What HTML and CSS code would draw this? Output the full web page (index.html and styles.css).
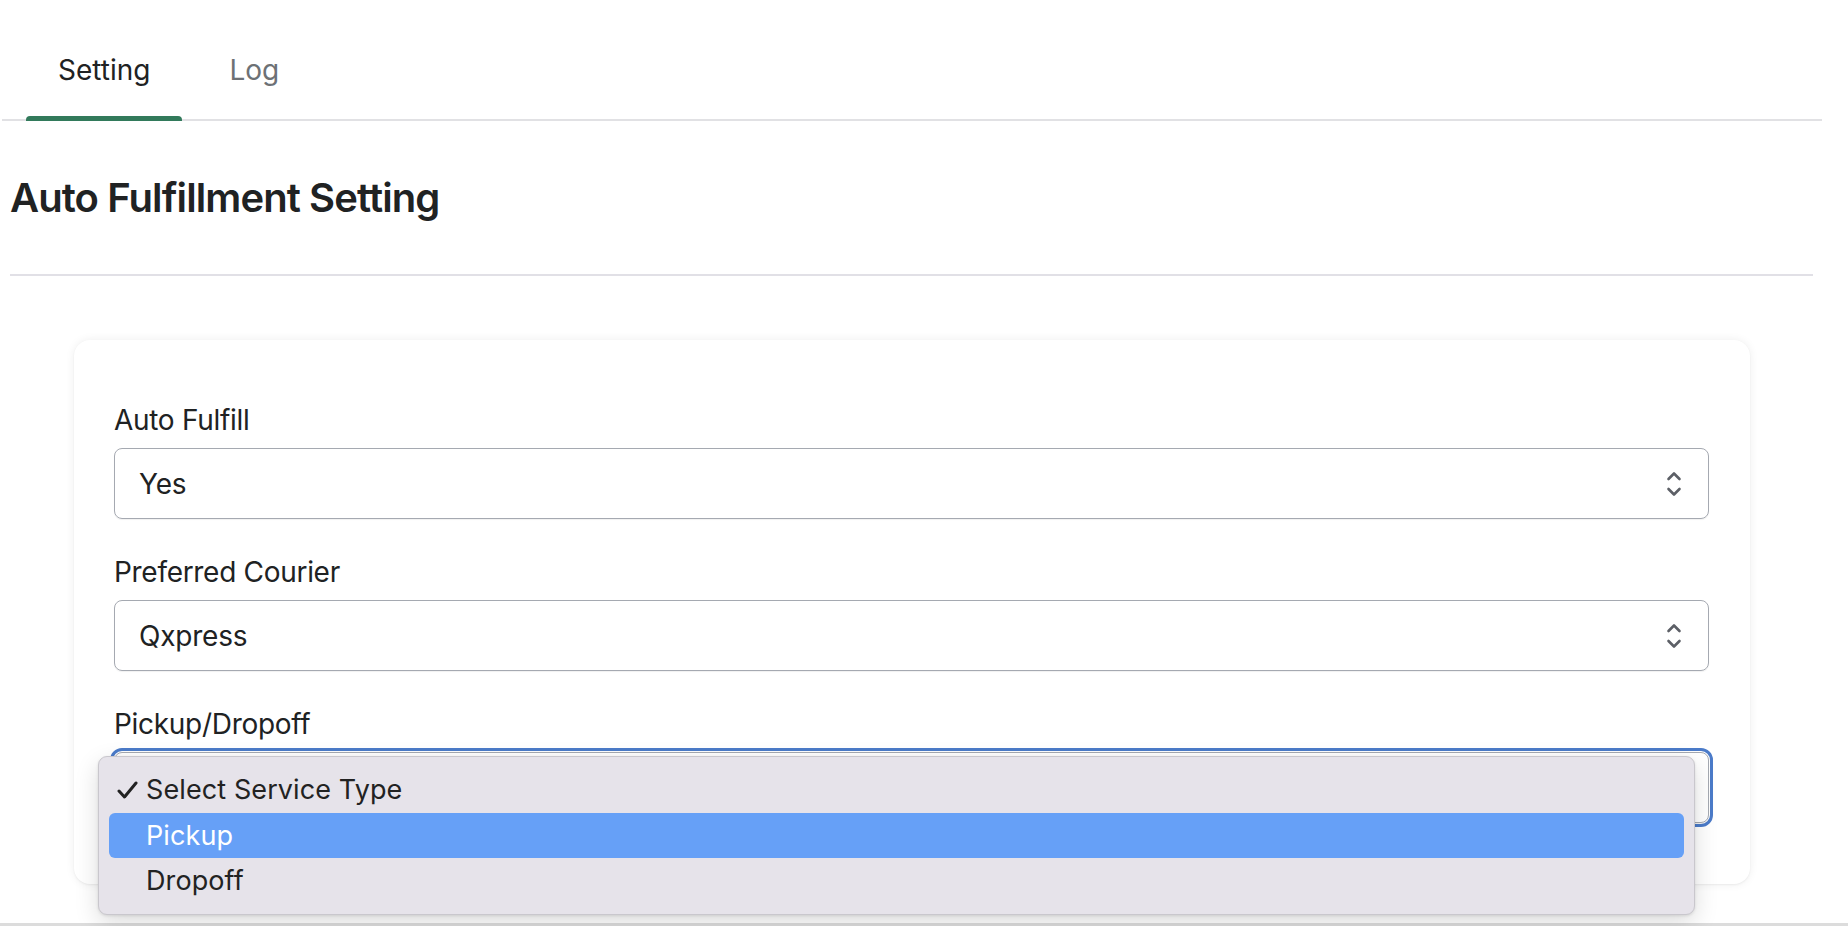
FILE: index.html
```html
<!DOCTYPE html>
<html lang="en">
<head>
<meta charset="utf-8">
<title>Auto Fulfillment Setting</title>
<link rel="stylesheet" href="styles.css">
</head>
<body>
<div class="page">
  <nav class="tabs">
    <div class="tab tab-active">Setting</div>
    <div class="tab">Log</div>
  </nav>

  <section class="section">
    <h1 class="title">Auto Fulfillment Setting</h1>
    <hr class="divider">

    <div class="card">
      <div class="field">
        <label class="label">Auto Fulfill</label>
        <div class="select">
          <span class="select-value">Yes</span>
          <svg class="chevron" width="16" height="26" viewBox="0 0 16 26"><path d="M2.5 8 L8 2.5 L13.5 8 M2.5 18 L8 23.5 L13.5 18" fill="none" stroke="#5c5f66" stroke-width="2.6" stroke-linecap="round" stroke-linejoin="round"/></svg>
        </div>
      </div>

      <div class="field">
        <label class="label">Preferred Courier</label>
        <div class="select">
          <span class="select-value">Qxpress</span>
          <svg class="chevron" width="16" height="26" viewBox="0 0 16 26"><path d="M2.5 8 L8 2.5 L13.5 8 M2.5 18 L8 23.5 L13.5 18" fill="none" stroke="#5c5f66" stroke-width="2.6" stroke-linecap="round" stroke-linejoin="round"/></svg>
        </div>
      </div>

      <div class="field">
        <label class="label">Pickup/Dropoff</label>
        <div class="select select-focused">
          <span class="select-value"></span>
          <svg class="chevron" width="16" height="26" viewBox="0 0 16 26"><path d="M2.5 8 L8 2.5 L13.5 8 M2.5 18 L8 23.5 L13.5 18" fill="none" stroke="#5c5f66" stroke-width="2.6" stroke-linecap="round" stroke-linejoin="round"/></svg>
          <ul class="menu">
            <li class="menu-item">
              <svg class="check" width="21" height="18" viewBox="0 0 21 18"><path d="M2 10 L7.5 16 L19 2" fill="none" stroke="#222" stroke-width="3" stroke-linecap="round" stroke-linejoin="round"/></svg>
              Select Service Type
            </li>
            <li class="menu-item menu-item-hover">Pickup</li>
            <li class="menu-item">Dropoff</li>
          </ul>
        </div>
      </div>
    </div>
  </section>
</div>
<div class="bottom-strip"></div>
</body>
</html>
```

FILE: styles.css
```css
* { box-sizing: border-box; }

html, body {
  margin: 0;
  padding: 0;
  background: #ffffff;
}

body {
  font-family: "Inter", "Noto Sans", "Liberation Sans", sans-serif;
  color: #202223;
  display: flex;
  flex-direction: column;
  min-height: 100vh;
  overflow: hidden;
}

.page {
  flex: 1;
}

.tabs {
  display: flex;
  gap: 15px;
  margin: 0 26px 0 2px;
  padding-left: 24px;
  border-bottom: 2px solid #e1e1e4;
}

.tab {
  position: relative;
  font-size: 28px;
  line-height: 34px;
  padding: 53px 32px 32px;
  color: #6d7175;
}

.tab-active {
  color: #202223;
}

.tab-active::after {
  content: "";
  position: absolute;
  left: 0;
  right: 0;
  bottom: -2px;
  height: 5px;
  background: #327a5b;
  border-radius: 4px 4px 0 0;
}

.section {
  padding: 0 35px 0 10px;
}

.title {
  margin: 51px 0 0;
  font-size: 40px;
  line-height: 51px;
  font-weight: 600;
  letter-spacing: -0.9px;
  color: #202223;
}

.divider {
  margin: 51px 0 0;
  border: 0;
  height: 2px;
  background: #e1e0e6;
}

.card {
  margin: 64px 63px 0 64px;
  background: #ffffff;
  border-radius: 16px;
  box-shadow: 0 0 10px rgba(0, 0, 0, 0.07), 0 1px 2px rgba(0, 0, 0, 0.05);
  padding: 63px 41px 61px 40px;
  display: flex;
  flex-direction: column;
  gap: 36px;
}

.field {
  display: flex;
  flex-direction: column;
  gap: 11px;
}

.label {
  font-size: 28px;
  line-height: 34px;
  letter-spacing: -0.3px;
  color: #202223;
}

.select {
  position: relative;
  height: 71px;
  border: 1.5px solid #a5a9b1;
  border-radius: 8px;
  display: flex;
  align-items: center;
  justify-content: space-between;
  padding: 0 26px 0 24px;
  font-size: 28px;
  letter-spacing: -0.2px;
  color: #202223;
  box-shadow: 0 1px 1px rgba(0, 0, 0, 0.06);
}

.select-focused {
  outline: 3px solid #4b7bc9;
  outline-offset: 1px;
}

.chevron {
  flex: none;
}

.menu {
  position: absolute;
  left: -17px;
  top: 3px;
  width: 1597px;
  margin: 0;
  padding: 10px;
  list-style: none;
  background: #e6e3ea;
  border: 1px solid #c9c7cd;
  border-radius: 9px;
  box-shadow: 0 8px 24px rgba(0, 0, 0, 0.14), 0 1px 3px rgba(0, 0, 0, 0.1);
  z-index: 5;
}

.menu-item {
  position: relative;
  height: 45.5px;
  line-height: 45.5px;
  padding-left: 37px;
  font-size: 27px;
  letter-spacing: 0.1px;
  color: #222222;
  border-radius: 6px;
}

.menu-item-hover {
  background: #66a0f7;
  color: #ffffff;
}

.check {
  position: absolute;
  left: 8px;
  top: 14px;
}

.bottom-strip {
  height: 3px;
  background: #dcdcdc;
}
```
